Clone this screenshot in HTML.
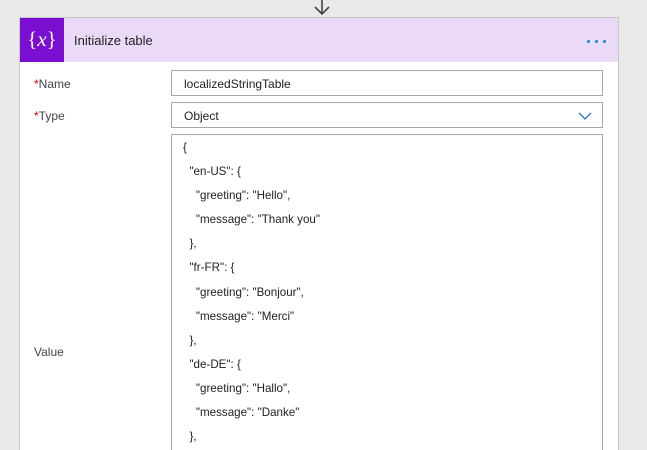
<!DOCTYPE html>
<html><head><style>
html,body{margin:0;width:647px;height:450px;overflow:hidden}
body{background:#e9e9e9;font-family:"Liberation Sans",sans-serif;position:relative;color:#333}
.arrow{position:absolute;left:310px;top:0}
.card{position:absolute;left:19px;top:17px;width:598px;height:440px;background:#fff;border:1px solid #c8c8c8}
.hdr{position:absolute;left:0;top:0;width:598px;height:44px;background:#eadaf7}
.ic{position:absolute;left:0;top:0;width:44px;height:44px;background:#7a0fd2;color:#fff;font-family:"Liberation Serif",serif;font-size:21px;line-height:42px;text-align:center}
.ttl{position:absolute;left:54px;top:15px;font-size:13px;color:#222}
.dot{position:absolute;top:22px;width:3px;height:3px;background:#1a7fe0;border-radius:50%}
.lbl{position:absolute;left:14px;font-size:12px;color:#444}
.lbl b{color:#d00;font-weight:normal}
.box{position:absolute;left:151px;width:430px;border:1px solid #a6a6a6;background:#fff}
.val{position:absolute;left:12px;top:6px;font-size:12px;color:#222}
.code{position:absolute;left:11px;top:1px;font-size:11.6px;color:#222;line-height:24.1px;white-space:pre}
</style></head><body>
<svg class="arrow" width="24" height="16" viewBox="0 0 24 16"><path d="M12 0V14M5 7L12 14L19 7" fill="none" stroke="#444" stroke-width="1.6"/></svg>
<div class="card">
<div class="hdr"><div class="ic">{<i>x</i>}</div><div class="ttl">Initialize table</div>
<div class="dot" style="left:567px"></div><div class="dot" style="left:575px"></div><div class="dot" style="left:583px"></div></div>
<div class="lbl" style="top:59px"><b>*</b>Name</div>
<div class="box" style="top:52px;height:24px"><div class="val">localizedStringTable</div></div>
<div class="lbl" style="top:91px"><b>*</b>Type</div>
<div class="box" style="top:84px;height:24px"><div class="val">Object</div>
<svg style="position:absolute;right:10px;top:9px" width="14" height="8"><path d="M1 1L7 7L13 1" fill="none" stroke="#2b6fb6" stroke-width="1.3"/></svg></div>
<div class="lbl" style="top:327px">Value</div>
<div class="box" style="top:116px;height:330px"><div class="code">{
  "en-US": {
    "greeting": "Hello",
    "message": "Thank you"
  },
  "fr-FR": {
    "greeting": "Bonjour",
    "message": "Merci"
  },
  "de-DE": {
    "greeting": "Hallo",
    "message": "Danke"
  },</div></div>
</div>
</body></html>
